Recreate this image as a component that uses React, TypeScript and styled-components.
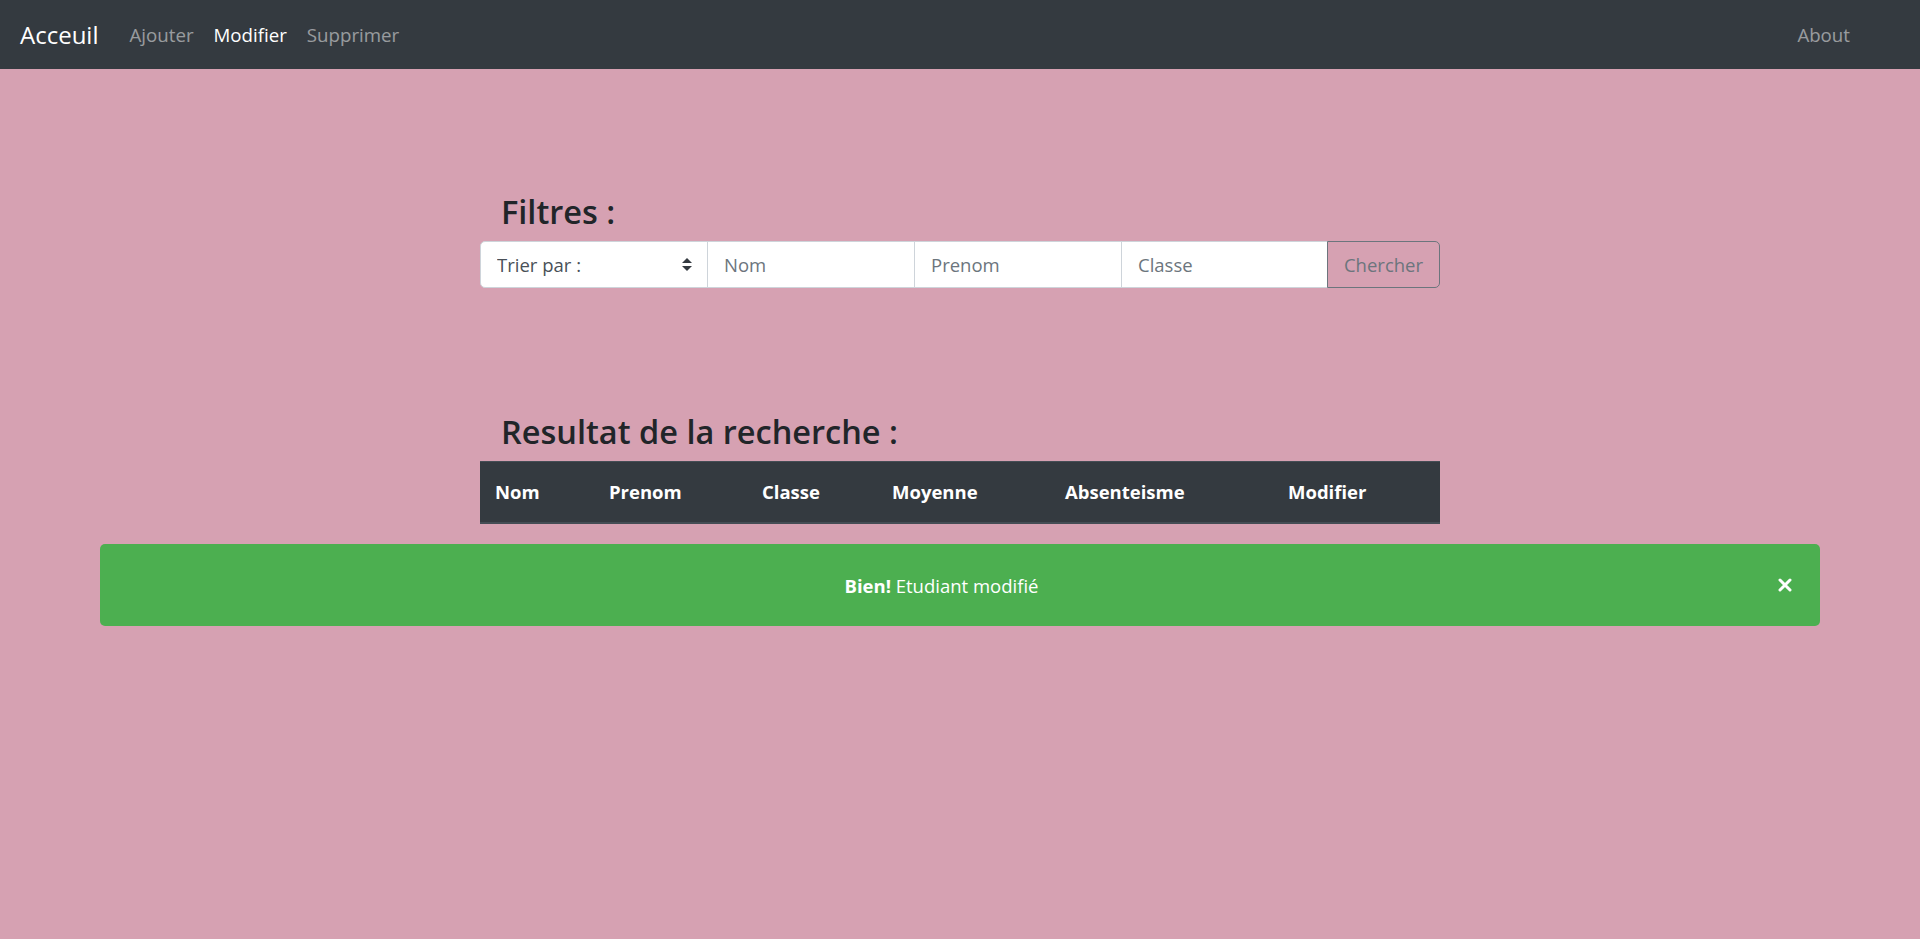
import React from "react";
import styled, { createGlobalStyle } from "styled-components";

const GlobalStyle = createGlobalStyle`
  html, body {
    margin: 0;
    padding: 0;
    background: #d6a1b2;
    font-family: "Open Sans", "Noto Sans", "Liberation Sans", sans-serif;
    color: #212529;
  }
  #root { min-height: 939px; background: #d6a1b2; }
  * { box-sizing: border-box; }
`;

const Navbar = styled.nav`
  height: 69px;
  background: #343a40;
  display: flex;
  align-items: center;
  padding: 0 60px 0 20px;
`;

const Brand = styled.a`
  font-size: 24px;
  line-height: 30px;
  color: #fff;
  margin-right: 21px;
  text-decoration: none;
`;

const NavLink = styled.a<{ $active?: boolean; $push?: boolean }>`
  font-size: 18.7px;
  line-height: 30px;
  padding: 0 10px;
  color: ${(p) => (p.$active ? "#fff" : "rgba(255,255,255,0.5)")};
  margin-left: ${(p) => (p.$push ? "auto" : "0")};
  text-decoration: none;
`;

const Main = styled.main`
  width: 960px;
  margin: 0 auto;
  padding-top: 122px;
`;

const Heading = styled.h3<{ $gap?: number }>`
  margin: ${(p) => p.$gap ?? 0}px 0 8px;
  padding-left: 21px;
  font-size: 32.5px;
  line-height: 42px;
  font-weight: 600;
  color: #212529;
`;

const FilterRow = styled.form`
  display: flex;
  height: 47px;
`;

const SelectBox = styled.div`
  width: 228px;
  display: flex;
  align-items: center;
  background: #fff;
  border: 1px solid #ced4da;
  border-radius: 5px 0 0 5px;
  padding: 0 15px 0 16px;
`;

const Select = styled.select`
  appearance: none;
  flex: 1;
  border: none;
  background: transparent;
  font-family: inherit;
  font-size: 18.5px;
  color: #495057;
  padding: 0;
  outline: none;
`;

const Input = styled.input<{ $w: number }>`
  width: ${(p) => p.$w}px;
  margin-left: -1px;
  border: 1px solid #ced4da;
  background: #fff;
  padding: 0 16px;
  font-family: inherit;
  font-size: 18.5px;
  color: #495057;
  outline: none;
  &::placeholder { color: #6c757d; }
`;

const SearchButton = styled.button`
  width: 113px;
  margin-left: -1px;
  border: 1px solid #6c757d;
  border-radius: 0 5px 5px 0;
  background: transparent;
  color: #6c757d;
  font-family: inherit;
  font-size: 18.5px;
  padding: 0;
`;

const Table = styled.table`
  width: 960px;
  border-collapse: collapse;
  margin-bottom: 20px;
`;

const Th = styled.th<{ $w: number }>`
  width: ${(p) => p.$w}px;
  background: #343a40;
  color: #fff;
  text-align: left;
  font-size: 18.5px;
  font-weight: 700;
  line-height: 30px;
  padding: 15px 15px;
  border-top: 1px solid #454d55;
  border-bottom: 2px solid #454d55;
`;

const AlertWrap = styled.div`
  padding: 0 100px;
`;

const Alert = styled.div`
  height: 82px;
  background: #4caf50;
  border-radius: 5px;
  color: #fff;
  display: flex;
  align-items: center;
  padding: 0 20px 0 25px;
  font-size: 18.5px;
`;

const Message = styled.div`
  flex: 1;
  text-align: center;
  margin-right: 12px;
  strong { font-weight: 700; }
`;

const CloseButton = styled.button`
  width: 30px;
  height: 30px;
  display: flex;
  align-items: center;
  justify-content: center;
  background: transparent;
  border: none;
  padding: 0;
  cursor: pointer;
`;

const columns: [string, number][] = [
  ["Nom", 114],
  ["Prenom", 153],
  ["Classe", 130],
  ["Moyenne", 173],
  ["Absenteisme", 223],
  ["Modifier", 167],
];

export default function App() {
  return (
    <>
      <GlobalStyle />
      <Navbar>
        <Brand href="#">Acceuil</Brand>
        <NavLink href="#">Ajouter</NavLink>
        <NavLink href="#" $active>Modifier</NavLink>
        <NavLink href="#">Supprimer</NavLink>
        <NavLink href="#" $push>About</NavLink>
      </Navbar>
      <Main>
        <Heading>Filtres :</Heading>
        <FilterRow onSubmit={(e) => e.preventDefault()}>
          <SelectBox>
            <Select defaultValue="">
              <option value="">Trier par :</option>
              <option value="nom">Nom</option>
              <option value="prenom">Prenom</option>
              <option value="classe">Classe</option>
            </Select>
            <svg width="10" height="13" viewBox="0 0 10 13">
              <path d="M5 0 L10 5 L0 5 Z" fill="#343a40" />
              <path d="M5 13 L10 8 L0 8 Z" fill="#343a40" />
            </svg>
          </SelectBox>
          <Input $w={208} placeholder="Nom" />
          <Input $w={208} placeholder="Prenom" />
          <Input $w={207} placeholder="Classe" />
          <SearchButton type="submit">Chercher</SearchButton>
        </FilterRow>
        <Heading $gap={123}>Resultat de la recherche :</Heading>
        <Table>
          <thead>
            <tr>
              {columns.map(([label, w]) => (
                <Th key={label} $w={w}>{label}</Th>
              ))}
            </tr>
          </thead>
        </Table>
      </Main>
      <AlertWrap>
        <Alert>
          <Message>
            <strong>Bien!</strong> Etudiant modifié
          </Message>
          <CloseButton aria-label="Close">
            <svg width="14" height="14" viewBox="0 0 14 14">
              <path d="M2 2 L12 12 M12 2 L2 12" stroke="#fff" strokeWidth="3" strokeLinecap="round" />
            </svg>
          </CloseButton>
        </Alert>
      </AlertWrap>
    </>
  );
}
